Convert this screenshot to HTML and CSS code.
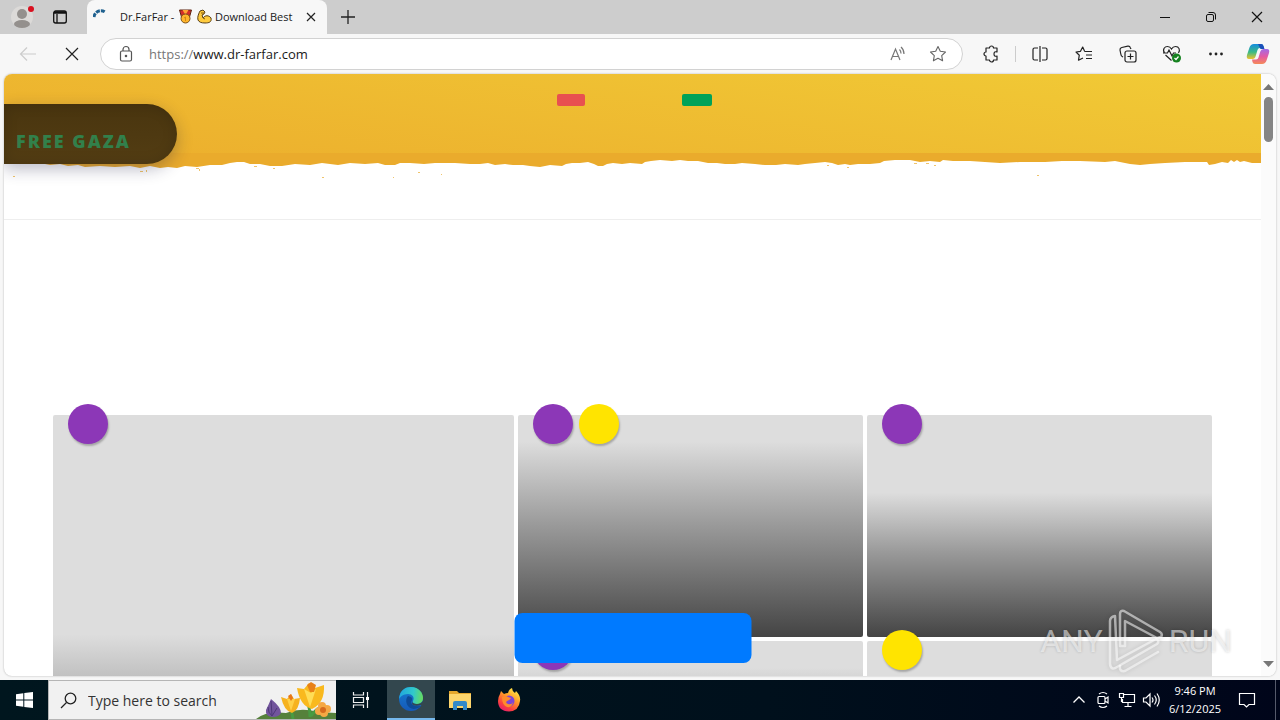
FILE: index.html
```html
<!DOCTYPE html>
<html lang="en">
<head>
<meta charset="utf-8">
<title>Dr.FarFar</title>
<link rel="stylesheet" href="styles.css">
</head>
<body>
<div class="browser">
  <div class="tabstrip">
    <button class="tool profile" aria-label="Profile">
      <svg width="26" height="26" viewBox="0 0 26 26"><circle cx="13" cy="13" r="11" fill="#dcdad8"/><circle cx="13" cy="10" r="5" fill="#94908d"/><ellipse cx="13" cy="20" rx="8" ry="4" fill="#94908d"/><circle cx="22" cy="5" r="3" fill="#d9101f"/></svg>
    </button>
    <button class="tool tabmenu" aria-label="Tab actions">
      <svg width="16" height="16" viewBox="0 0 16 16" fill="none" stroke="#111" stroke-width="1.3"><rect x="1.7" y="2" width="12.6" height="12" rx="2"/><path d="M2 3.500h12" stroke-width="2.500"/><path d="M5 5v9"/></svg>
    </button>
    <div class="tab">
      <svg class="loading" width="16" height="16" viewBox="0 0 16 16" fill="none" stroke="#20618f" stroke-width="3"><path d="M1 8a7 7 0 0 1 11-5" stroke-dasharray="4 1"/></svg>
      <span class="tab-title">Dr.FarFar -
        <svg role="img" aria-label="Medal" width="15" height="15" viewBox="0 0 15 15"><path d="M1.500 1h12l-2 7h-8z" fill="#d42d2b" stroke="#5c2511"/><path d="M4.500 1l3 5 3-5z" fill="#ffa333"/><circle cx="7.500" cy="9.500" r="4.500" fill="#ffb52b" stroke="#79501b"/><path d="M6 9l1.500-1v4" stroke="#d48818" fill="none"/></svg>
        <svg role="img" aria-label="Flexed arm" width="15" height="15" viewBox="0 0 15 15"><path d="M3 2l3-1 2 2-1 2-2 1 1 3c2-3 6-3 8 0 1 4-2 5-6 5-4 0-6-1-7-3-1-3 1-7 2-9z" fill="#ffcb3d" stroke="#594018"/><path d="M6 9l2 1M4 4h3" stroke="#785418"/></svg>
        Download Best</span>
      <button class="tab-close" aria-label="Close tab"><svg width="10" height="10" viewBox="0 0 10 10" stroke="#222" stroke-width="1.200"><path d="M1 1l8 8M9 1L1 9"/></svg></button>
    </div>
    <button class="tool newtab" aria-label="New tab"><svg width="14" height="14" viewBox="0 0 14 14" stroke="#222" stroke-width="1.300"><path d="M7 0v14M0 7h14"/></svg></button>
    <div class="window-controls">
      <button class="tool" aria-label="Minimize"><svg width="12" height="12" viewBox="0 0 12 12" stroke="#111"><path d="M1 6.500h10"/></svg></button>
      <button class="tool" aria-label="Restore"><svg width="12" height="12" viewBox="0 0 12 12" fill="none" stroke="#111"><rect x="1.500" y="3.500" width="7" height="7" rx="1.500"/><path d="M3.500 1.500H8q2.500 0 2.500 2.500v4.500"/></svg></button>
      <button class="tool" aria-label="Close"><svg width="12" height="12" viewBox="0 0 12 12" stroke="#111" stroke-width="1.200"><path d="M1 1l10 10M11 1L1 11"/></svg></button>
    </div>
  </div>

  <div class="toolbar">
    <div class="nav-buttons">
      <button class="tool" aria-label="Back"><svg width="18" height="16" viewBox="0 0 18 16" fill="none" stroke="#ccc" stroke-width="1.200"><path d="M17 8H2M8 1.500L1.500 8 8 14.500"/></svg></button>
      <button class="tool" aria-label="Stop"><svg width="14" height="14" viewBox="0 0 14 14" stroke="#222" stroke-width="1.200"><path d="M1 1l12 12M13 1L1 13"/></svg></button>
    </div>
    <div class="address">
      <svg width="16" height="18" viewBox="0 0 16 18" fill="none" stroke="#555" stroke-width="1.200"><rect x="2.500" y="6" width="11" height="10" rx="1.500"/><path d="M5 6V4.500a3 3 0 0 1 6 0V6"/><circle cx="8" cy="11" r=".7" fill="#555"/></svg>
      <div class="url" role="textbox" aria-label="Address" tabindex="0"><span>https://</span>www.dr-farfar.com</div>
      <button class="tool" aria-label="Read aloud"><svg width="18" height="18" viewBox="0 0 18 18" fill="none" stroke="#777" stroke-width="1.200"><path d="M2 15L6.500 4 11 15M3.500 11.500h6M10.500 4.500q1.500 1.500 1.500 4M12 2q3 2.500 3 7"/></svg></button>
      <button class="tool" aria-label="Favorite"><svg width="18" height="18" viewBox="0 0 18 18" fill="none" stroke="#666" stroke-width="1.100" stroke-linejoin="round"><path d="M9 1.500l2.300 4.800 5.200.7-3.800 3.600.9 5.200L9 13.300l-4.600 2.500.9-5.200L1.500 7l5.200-.7z"/></svg></button>
    </div>
    <div class="actions">
      <button class="tool" aria-label="Extensions"><svg width="18" height="18" viewBox="0 0 18 18" fill="none" stroke="#222" stroke-width="1.200"><path d="M4 3h3.500a2 2 0 0 1 4 0H15v4q-3-1-3 2t3 2v4h-3.500a2 2 0 0 1-4 0H4v-4a2 2 0 0 1 0-4z" stroke-linejoin="round"/></svg></button>
      <button class="tool divided" aria-label="Split screen"><svg width="18" height="18" viewBox="0 0 18 18" fill="none" stroke="#222" stroke-width="1.200"><path d="M7 3H3.500Q2 3 2 4.500v9Q2 15 3.500 15H7M11 3h3.500Q16 3 16 4.500v9q0 1.500-1.500 1.500H11M9 1v16"/></svg></button>
      <button class="tool" aria-label="Favorites"><svg width="18" height="18" viewBox="0 0 18 18" fill="none" stroke="#222" stroke-width="1.200" stroke-linejoin="round"><path d="M10 6h-.5L7.700 2 5.500 6.300 1 7l3.300 3.200-.8 5L8 13M9.500 6.500H17M11 10h6M11 13.500h6"/></svg></button>
      <button class="tool" aria-label="Collections"><svg width="18" height="18" viewBox="0 0 18 18" fill="none" stroke="#222" stroke-width="1.200"><rect x="6" y="6" width="11" height="11" rx="2"/><path d="M11.500 8.500v6M8.500 11.500h6M4 12l-.5-.3Q2 11 1.800 9L1 5q-.2-2 1.800-2.500l6-1.300q2-.3 2.500 1.500L12 4"/></svg></button>
      <button class="tool" aria-label="Browser essentials"><svg width="20" height="18" viewBox="0 0 20 18" fill="none" stroke="#222" stroke-width="1.200"><path d="M2.500 8C0 4 3 1.500 5.500 1.500 8 1.500 9.500 4 9.500 4S11 1.500 13.500 1.500C17 1.500 18.500 5 16.500 8M3.500 10l6 5.500M1 8h4.500L7 5l3 6 1.500-3H14"/><circle cx="14.500" cy="13" r="4.500" fill="#15821f" stroke="none"/><path d="M12.500 13l1.500 1.500 2.500-3" stroke="#fff"/></svg></button>
      <button class="tool" aria-label="More"><svg width="16" height="16" viewBox="0 0 16 16" fill="#222"><circle cx="2.500" cy="8" r="1.400"/><circle cx="8" cy="8" r="1.400"/><circle cx="13.500" cy="8" r="1.400"/></svg></button>
      <button class="tool" aria-label="Copilot"><svg width="24" height="22" viewBox="0 0 24 22"><defs><linearGradient id="cpa" x1="0" y1="0" x2="0" y2="1"><stop stop-color="#148ce0"/><stop offset=".55" stop-color="#3dbb84"/><stop offset="1" stop-color="#f0c22c"/></linearGradient><linearGradient id="cpb" x1="0" y1="0" x2="0" y2="1"><stop stop-color="#a26be6"/><stop offset=".5" stop-color="#e45aa4"/><stop offset="1" stop-color="#f58a58"/></linearGradient></defs><path d="M8 1h7q2 0 2.500 2l.5 2h-4q-2 0-2.500 2L9.700 13q-.7 3-3.200 3H3q-3 0-2-4l2.300-7Q4.500 1 8 1z" fill="url(#cpa)"/><path d="M12 1h3q2 0 2.500 2l1 3h-4z" fill="#1b4fb9"/><path d="M16 21H9q-2 0-2.500-2L6 16.500h4q2 0 2.500-2L14.300 8.500q.7-2.500 3.200-2.500H21q3 0 2 4l-2.300 7Q19.500 21 16 21z" fill="url(#cpb)"/></svg></button>
    </div>
  </div>

  <div class="viewport">
    <main class="page">
      <header class="hero">
        <nav class="hero-nav"><a class="chip chip-red" href="#" aria-label="Red"></a><a class="chip chip-green" href="#" aria-label="Green"></a></nav>
        <svg class="torn" viewBox="4 153 1257 27" preserveAspectRatio="none" fill="#eaab2c"><path d="M4 153H1261V163L1252 163 1244 161 1240 162 1237 160 1234 162 1231 160 1228 163 1222 162 1215 164 1209 165 1207 162 1185 162 1165 163 1150 164 1140 165 1130 164 1115 161 1105 162 1080 161 1062 161 1045 162 1020 162 1000 163 985 162 970 161 953 161 943 160 940 162 930 161 920 162 910 160 895 160 884 161 880 163 870 164 858 164 850 165 845 164 838 165 832 163 825 162 815 163 805 164 798 165 785 164 776 165 765 165 755 164 742 163 735 164 725 164 717 163 708 163 698 161 688 161 680 160 672 161 660 160 651 161 645 162 642 164 630 163 622 164 613 163 607 164 603 166 598 166 594 164 588 162 580 163 572 163 566 164 562 166 550 165 540 167 530 166 523 165 513 165 505 164 495 165 488 163 480 164 470 164 455 163 435 163 424 164 410 163 400 163 395 165 385 165 378 163 365 164 350 163 338 165 322 163 310 165 295 164 282 166 270 166 260 164 250 164 244 162 237 162 230 163 222 165 210 165 197 167 185 166 177 168 168 167 160 168 150 166 140 168 130 166 115 167 100 166 85 167 78 165 68 166 60 164 50 165 40 163H4z"/><path opacity=".7" d="M13 176h2v1h-2zM140 171h3v1h-3zM146 170h1v2h-1zM196 168h3v1h-3zM199 169h1v2h-1zM254 166h3v1h-3zM273 168h2v1h-2zM322 177h2v1h-2zM418 172h2v1h-2zM441 174h1v1h-1zM393 177h1v1h-1zM827 165h2v1h-2zM847 167h2v1h-2zM914 163h3v1h-3zM926 163h3v1h-3zM934 165h2v1h-2zM1037 175h2v1h-2z"/></svg>
        <div class="ribbon">FREE GAZA</div>
      </header>
      <section class="cards">
        <article class="card card-large"><div class="badges"><i class="dot purple"></i></div></article>
        <article class="card shade-tall"><div class="badges"><i class="dot purple"></i><i class="dot yellow"></i></div></article>
        <article class="card shade-short"><div class="badges"><i class="dot purple"></i></div></article>
        <article class="card shade-tall"><div class="badges"><i class="dot purple"></i></div></article>
        <article class="card shade-short"><div class="badges"><i class="dot yellow"></i></div></article>
      </section>
      <button class="cta" aria-label="Notification"></button>
    </main>
    <div class="scrollbar">
      <svg width="11" height="6" viewBox="0 0 11 6"><path d="M0 6L5.500 0 11 6z" fill="#777"/></svg>
      <div class="thumb"></div>
      <svg width="11" height="6" viewBox="0 0 11 6"><path d="M0 0L5.500 6 11 0z" fill="#777"/></svg>
    </div>
    <div class="watermark"><span>ANY</span>
      <svg width="56" height="64" viewBox="0 0 56 64" fill="none" stroke-linejoin="round" stroke-linecap="round"><g stroke="#fff" stroke-opacity=".55" stroke-width="2.500"><path d="M12 5q0-4 4-3l36 21q3 2 1 5l-4 1-32-17v25h-5z"/><path d="M7 7Q2 8 2 12v43q1 7 7 3l40-23q3-3-1-5L9 51z"/><path d="M12 57q-1 6 5 5l33-19"/></g></svg>
      <span>RUN</span></div>
  </div>
</div>

<div class="taskbar">
  <button class="task start" aria-label="Start"><svg width="17" height="16" viewBox="0 0 17 16" fill="#fff"><path d="M0 2.200L7.300 1.200V7.500H0zM8.300 1L17 0v7.500H8.300zM0 8.500h7.300v6.300L0 13.800zM8.300 8.500H17V16l-8.700-1z"/></svg></button>
  <label class="search">
    <svg width="17" height="17" viewBox="0 0 17 17" fill="none" stroke="#222" stroke-width="1.300"><circle cx="10.500" cy="6.500" r="5.300"/><path d="M6.500 10.500L1 16"/></svg>
    <input type="text" placeholder="Type here to search" aria-label="Search">
    <svg class="flowers" width="80" height="38" viewBox="0 0 80 38"><path d="M0 38Q10 30 30 32 45 26 62 31L80 32V38z" fill="#55813b"/><path d="M37 38Q36 30 34 27M54 36Q54 27 51 20M55 35Q60 28 64 27" stroke="#479b42" stroke-width="3" fill="none"/><path d="M15 18q10 8 10 14-2 4-8 4-8 0-7-7 2-4 5-11z" fill="#72549c"/><path d="M15 20l1 14M12 26q0 6 4 9l5-8" stroke="#4d3877" fill="none"/><path d="M25 16l6 2 4-5 3 5 6-1q-1 12-8 15-8-2-11-16z" fill="#f6b21f"/><path d="M31 18l4 12 4-12" fill="#ffd047"/><path d="M32 15l3-2 2 4-2 3z" fill="#e77618"/><path d="M41 7l7 1 5-6 6 5 9-3q1 18-12 24-12-3-15-21z" fill="#f9b91e"/><path d="M48 8l6 18 6-18-5 4z" fill="#ffdd56"/><path d="M51 4l4-3 5 3-2 7h-4z" fill="#e88117"/><g fill="#f5a844"><circle cx="66" cy="25" r="4"/><circle cx="71" cy="28" r="4"/><circle cx="68" cy="32" r="4"/><circle cx="63" cy="30" r="4"/></g><circle cx="67" cy="29" r="3" fill="#d76b1d"/></svg>
  </label>
  <button class="task" aria-label="Task view"><svg width="18" height="18" viewBox="0 0 18 18" fill="none" stroke="#eee" stroke-width="1.200"><path d="M1.500 1v3h10V1M1.500 17v-3h10v3M1.500 6.500h10v5h-10zM15.500 1v16"/><path d="M14 6h3v3h-3z" fill="#fff" stroke="none"/></svg></button>
  <button class="task active" aria-label="Edge"><svg width="26" height="26" viewBox="0 0 26 26"><defs><linearGradient id="ega" x1="0" y1=".3" x2="1" y2=".4"><stop stop-color="#20a5df"/><stop offset=".6" stop-color="#31c9cb"/><stop offset="1" stop-color="#66dc60"/></linearGradient><linearGradient id="egb" x1="0" y1="0" x2="0" y2="1"><stop stop-color="#167cd2"/><stop offset="1" stop-color="#1559b8"/></linearGradient></defs><circle cx="13" cy="13" r="12" fill="url(#egb)"/><path d="M1 13C2 4 7 1 13 1c8 0 12 6 12 11 0 4-3 6-6 6-3 0-5-1-4-3 2-4-1-7-5-7-5 0-8 3-9 5z" fill="url(#ega)"/><path d="M10 10c-4 4-1 13 6 13q4 0 7-3-6 1-8-1-3-2-1-5 1-3-4-4z" fill="#0e4a96"/><path d="M15 15q-1 3 4 3 4 0 6-3v4h-2q-7 2-9-1z" fill="#33474e"/></svg></button>
  <button class="task" aria-label="File Explorer"><svg width="22" height="20" viewBox="0 0 22 20"><path d="M0 1h8l2 2h12v15H0z" fill="#e5a72c"/><path d="M0 4h22v14H0z" fill="#fdd56c"/><path d="M4 20v-7q0-2 2-2h10q2 0 2 2v7h-4v-4H8v4z" fill="#3489c8"/></svg></button>
  <button class="task" aria-label="Firefox"><svg width="24" height="24" viewBox="0 0 24 24"><defs><linearGradient id="ffx" x1=".8" y1="0" x2=".2" y2="1"><stop stop-color="#fff04c"/><stop offset=".4" stop-color="#ff9d28"/><stop offset=".75" stop-color="#fb413e"/><stop offset="1" stop-color="#e31a72"/></linearGradient></defs><path d="M3 6l1-3 3 3q2-1 4-1 1-4 4-5 0 3 3 5l1-2q5 5 4 10-1 10-11 10.500Q1 23 1 13 1 9 3 6z" fill="url(#ffx)"/><circle cx="12" cy="13" r="5.500" fill="#7c45d7"/><path d="M5 9q4-2 6 0l3 1q-1 2-4 3-2 2 1 3 4 1 5-2-1 6-6 5-5-2-5-10z" fill="#ff8b2b"/></svg></button>
  <div class="tray">
    <button class="tray-icon" aria-label="Hidden icons"><svg width="14" height="14" viewBox="0 0 14 14" fill="none" stroke="#fff" stroke-width="1.300"><path d="M1.500 9.500L7 4l5.500 5.500"/></svg></button>
    <button class="tray-icon" aria-label="Camera"><svg width="14" height="18" viewBox="0 0 14 18" fill="none" stroke="#fff" stroke-width="1.200"><rect x="2" y="5.500" width="7" height="7" rx="1"/><path d="M9 8l3-2v6L9 10M3 3Q7 0 11 3M3 15q4 3 8 0"/></svg></button>
    <button class="tray-icon" aria-label="Network"><svg width="18" height="16" viewBox="0 0 18 16" fill="none" stroke="#fff" stroke-width="1.200"><path d="M6 2.500h10.500v8H4.500V7M10 10.500v4M6.500 14.500h7M1.500 1.500h4v4h-4zM3.500 6v4"/></svg></button>
    <button class="tray-icon" aria-label="Volume"><svg width="18" height="16" viewBox="0 0 18 16" fill="none" stroke="#fff" stroke-width="1.200"><path d="M1.500 6h2.500l4-4v12l-4-4H1.500zM10 5.500q2 2.500 0 5M12.500 3.500q3.500 4.500 0 9M15 1.500q4.500 6.500 0 13"/></svg></button>
    <div class="clock"><time>9:46 PM</time><time>6/12/2025</time></div>
    <button class="notify" aria-label="Notifications"><svg width="18" height="18" viewBox="0 0 18 18" fill="none" stroke="#fff" stroke-width="1.200"><path d="M1.500 2.500h15v11H11L8.500 16l-2.500-2.500H1.500z"/></svg></button>
  </div>
</div>
</body>
</html>
```
FILE: styles.css
```css
* { box-sizing: border-box; }

body {
  margin: 0;
  height: 100vh;
  display: flex;
  flex-direction: column;
  overflow: hidden;
  font-family: "Open Sans", "Noto Sans", sans-serif;
  font-size: 12px;
  color: #1a1a1a;
}

button {
  border: 0;
  padding: 0;
  background: none;
  font: inherit;
  color: inherit;
}

svg { display: block; flex: none; }

.browser {
  flex: 1;
  min-height: 0;
  display: flex;
  flex-direction: column;
  background: #f7f7f7;
}

/* Tabs */
.tabstrip {
  display: flex;
  height: 34px;
  background: #cdcdcd;
}

.tool { display: grid; place-items: center; flex: none; }
.profile { width: 44px; }
.tabmenu { width: 32px; }

.tab {
  display: flex;
  align-items: center;
  width: 240px;
  margin-left: 11px;
  padding: 0 10px 0 6px;
  border-radius: 8px 8px 0 0;
  background: #f7f7f7;
}

.tab-title {
  flex: 1;
  margin-left: 11px;
  white-space: nowrap;
  font-size: 11px;
  line-height: 18px;
}

.tab-title svg { display: inline-block; margin-left: 1px; vertical-align: -3px; }
.tab-close { display: grid; place-items: center; width: 12px; height: 24px; margin-left: 8px; }
.newtab { width: 42px; }
.window-controls { display: flex; margin-left: auto; }
.window-controls .tool { width: 46px; }

/* Toolbar */
.toolbar {
  display: flex;
  align-items: center;
  height: 40px;
  padding-left: 6px;
}

.nav-buttons { display: flex; width: 94px; }
.nav-buttons .tool { width: 44px; }

.address {
  flex: 1;
  display: flex;
  align-items: center;
  height: 32px;
  padding: 0 4px 0 17px;
  border: 1px solid #d2d2d2;
  border-radius: 16px;
  background: #fff;
}

.url { flex: 1; margin-left: 15px; font-size: 13px; line-height: 20px; }
.url span { color: #777; }
.address .tool { width: 40px; }

.actions { display: flex; align-items: center; padding-left: 6px; }
.actions .tool { width: 44px; height: 32px; }
.actions .divided { width: 49px; padding-left: 4px; position: relative; }
.divided::before {
  content: "";
  position: absolute;
  left: 2px;
  top: 8px;
  height: 16px;
  border-left: 1px solid #ccc;
}
.actions .tool:last-child { width: 42px; padding-right: 2px; }

/* Page */
.viewport {
  position: relative;
  flex: 1;
  min-height: 0;
  display: flex;
  margin: 0 4px 4px;
  overflow: hidden;
  border-radius: 8px;
  background: #fff;
  box-shadow: 0 0 2px #aaa;
}

.page { position: relative; flex: 1; overflow: hidden; }

.hero {
  position: relative;
  height: 146px;
  border-bottom: 1px solid #eee;
  background: linear-gradient(8deg, #ecae2d, #f1cb36) top / 100% 79px no-repeat;
}

.hero-nav {
  display: flex;
  justify-content: center;
  gap: 97px;
  height: 79px;
  padding: 20px 0 0 4px;
}

.chip { height: 12px; border-radius: 2px; }
.chip-red { width: 28px; background: #e85050; }
.chip-green { width: 30px; background: #00a259; }
.torn { width: 100%; height: 27px; }

.ribbon {
  position: absolute;
  left: 0;
  top: 30px;
  width: 173px;
  height: 60px;
  padding: 24px 12px 0;
  border-radius: 0 30px 30px 0;
  background: linear-gradient(#49350f, #533d13);
  box-shadow: 0 5px 16px rgba(30, 30, 70, .3), inset 0 0 14px rgba(0, 0, 0, .15);
  color: #32804b;
  font-size: 18px;
  font-weight: 800;
  letter-spacing: 2px;
  line-height: 26px;
  white-space: nowrap;
}

.cards {
  display: grid;
  grid-template-columns: 461fr 345fr 345fr;
  grid-auto-rows: 222px;
  gap: 4px;
  padding: 195px 49px 0;
}

.card { position: relative; border-radius: 2px; background: #ddd; }
.card-large { grid-row: span 2; background: linear-gradient(#ddd 49%, #444); }
.shade-tall { background: linear-gradient(#ddd 12%, #999 50%, #444); }
.shade-short { background: linear-gradient(#ddd 35%, #999 62%, #444); }

.badges { position: absolute; left: 15px; top: -11px; display: flex; gap: 6px; }
.dot { width: 40px; height: 40px; border-radius: 50%; box-shadow: 1px 2px 2px rgba(0, 0, 0, .25); }
.purple { background: #8c37b7; }
.yellow { background: #ffe400; }

.cta {
  position: absolute;
  left: 50%;
  bottom: 13px;
  width: 237px;
  height: 50px;
  transform: translateX(-50%);
  border-radius: 8px;
  background: #007aff;
}

.scrollbar {
  display: flex;
  flex-direction: column;
  align-items: center;
  width: 15px;
  padding: 10px 0 9px;
  background: #fbfbfb;
}

.thumb { width: 9px; height: 45px; margin: 7px 0 auto; border-radius: 5px; background: #858585; }

.watermark {
  position: absolute;
  right: 44px;
  bottom: 3px;
  display: flex;
  align-items: center;
  gap: 5px;
  color: rgba(255, 255, 255, .55);
  font-family: Roboto, "Liberation Sans", sans-serif;
  font-size: 32px;
  line-height: 40px;
  text-shadow: 0 0 3px rgba(0, 0, 0, .2);
}

.watermark svg { filter: drop-shadow(0 0 2px rgba(0, 0, 0, .25)); }

/* Taskbar */
.taskbar {
  display: flex;
  height: 40px;
  background: linear-gradient(to right, #00161e, #00101c 60%, #00051a);
  color: #fff;
}

.task { display: grid; place-items: center; width: 49px; }
.start { width: 48px; }

.search {
  display: flex;
  align-items: center;
  width: 288px;
  padding-left: 11px;
  border: 1px solid #b5b5b5;
  border-right: 0;
  background: #f1f1f1;
}

.search input {
  flex: 1;
  min-width: 0;
  margin-left: 11px;
  padding: 0;
  border: 0;
  outline: 0;
  background: none;
  font: inherit;
  font-size: 14px;
}

.search input::placeholder { color: #333; opacity: 1; }
.task.active { width: 48px; margin-left: 2px; background: #33474e; border-bottom: 2px solid #76b9ed; }

.tray { display: flex; margin-left: auto; padding-right: 4px; }
.tray-icon { display: grid; place-items: center; width: 24px; }

.clock {
  display: flex;
  flex-direction: column;
  justify-content: center;
  width: 64px;
  font-size: 11px;
  line-height: 18px;
  text-align: center;
}

.notify { display: grid; place-items: center; width: 49px; padding-right: 9px; border-right: 1px solid #555a6b; }
```
